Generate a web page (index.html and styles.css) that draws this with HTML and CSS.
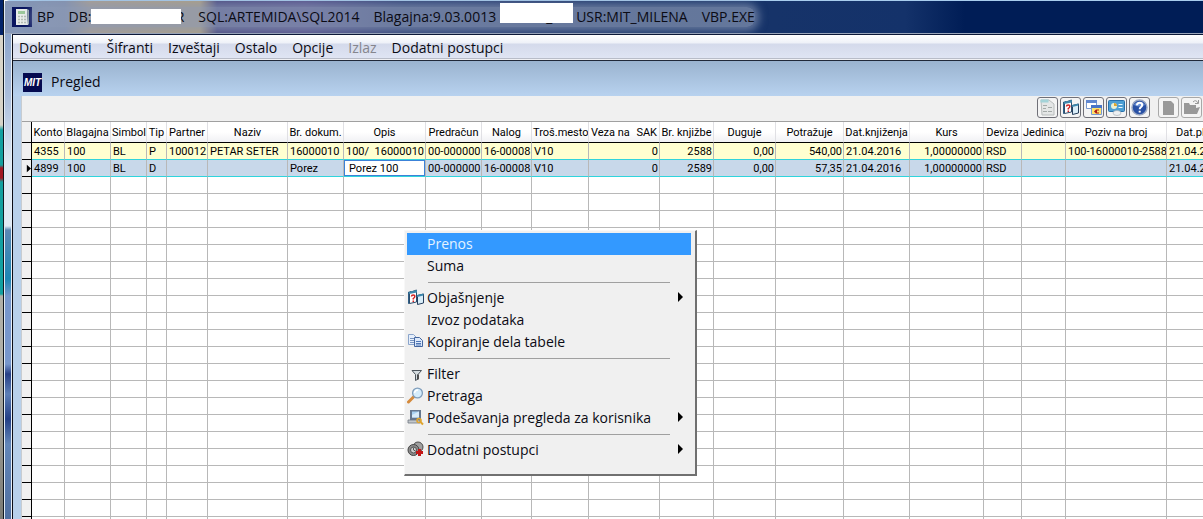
FILE: index.html
```html
<!DOCTYPE html>
<html lang="sr-Latn">
<head>
<meta charset="utf-8">
<title>BP - Pregled</title>
<link rel="stylesheet" href="styles.css">
</head>
<body>
<div class="desktop"></div>
<div class="window">
  <header class="titlebar">
    <svg class="app-icon" viewBox="0 0 20 20"><rect width="20" height="20" fill="#0a1560"/><path d="M4 2h11l1 16H4z" fill="#e9ecea"/><path d="M15 2l2 1v14l-1 1z" fill="#9aa"/><rect x="6" y="4" width="7" height="3" fill="#9cc79a"/><path d="M6 9.500h8M6 12.500h8M6 15.500h8" stroke="#b4bcb4" stroke-width="1.500" stroke-dasharray="2 1"/></svg>
    <div class="title-text">
      <span>BP</span>
      <span class="db">DB:<span class="mask mask-db"><span>_</span><span>_R</span></span></span>
      <span>SQL:ARTEMIDA\SQL2014</span>
      <span>Blagajna:9.03.0013</span>
      <span class="mask mask-user"><span>_</span></span>
      <span>USR:MIT_MILENA</span>
      <span class="exe">VBP.EXE</span>
    </div>
  </header>
  <div class="body">
    <div class="frame"></div>
    <div class="client">
      <nav class="menubar">
        <button>Dokumenti</button><button>Šifranti</button><button>Izveštaji</button><button>Ostalo</button><button>Opcije</button><button disabled>Izlaz</button><button>Dodatni postupci</button>
      </nav>
      <div class="child-title"><span class="logo">MIT</span><h1>Pregled</h1></div>
      <main class="child">
        <div class="toolbar">
          <button aria-label="List"><svg viewBox="0 0 19 19"><path d="M3 2h8l5 4v11H4z" fill="#e4e6e6" stroke="#b8bcbc"/><path d="M2.500 1.500h8v3h-8z" fill="#a3d3d8"/><path d="M5 7.500h4M5 10.500h3M5 13.500h4M10 9.500h4M10 13.500h4" stroke="#a4aaa8"/></svg></button>
          <button aria-label="Objašnjenje"><svg viewBox="0 0 19 19"><use href="#i-explain" x="1" y="1" width="17" height="17"/></svg></button>
          <button aria-label="Prozori"><svg viewBox="0 0 19 19"><path d="M2.500 2.500h10v8h-10z" fill="#fff" stroke="#7899d0"/><path d="M2 2h11v3H2z" fill="#6087cf"/><path d="M7.500 7.500h10v9h-10z" fill="#ffe36a" stroke="#7899d0"/><path d="M7 7h11v3H7z" fill="#4975c6"/><path d="M15 11.500h-3l-2 2 2 2h3v-1h-2v-2h2z" fill="#b01818"/></svg></button>
          <button aria-label="Prikaz"><svg viewBox="0 0 19 19"><rect x="1.500" y="2.500" width="16" height="11" rx="1" fill="#4d9fd3" stroke="#2871ac"/><circle cx="7" cy="8" r="3" fill="#e9f1d4"/><path d="M7 8V5a3 3 0 0 1 3 3z" fill="#e0a52c"/><path d="M11.500 6.500h4M11.500 9.500h4" stroke="#e8f6ff"/><ellipse cx="10" cy="15" rx="4" ry="2.500" fill="#eef0f2" stroke="#a0a8b0" stroke-width=".6"/></svg></button>
          <button aria-label="Pomoć"><svg viewBox="0 0 19 19"><circle cx="9.500" cy="9.500" r="7.500" fill="#2850a5" stroke="#9aa7c2" stroke-width="1.500"/><path d="M4 7a6 5 0 0 1 11 0q-5 3-11 0z" fill="#6d92d6"/><path d="M7 7.300q0-2.600 2.600-2.600t2.600 2.300q0 1.500-1.500 2.300-1 .6-1 1.900M9.700 12.700v1.800" fill="none" stroke="#fff" stroke-width="2"/></svg></button>
          <button class="gap" aria-label="Novi" disabled><svg viewBox="0 0 19 19"><path d="M4 3h8l3 3v11H4z" fill="#999"/></svg></button>
          <button aria-label="Otvori" disabled><svg viewBox="0 0 19 19"><path d="M2 5h5l1 2h6v3l4-1-3 7H2z" fill="#999"/><path d="M11 4q3-3 5 1M16.500 2v3.500H13" fill="none" stroke="#999"/></svg></button>
        </div>
        <div class="grid-area">
          <table class="grid">
            <colgroup><col class="w10"><col class="w33"><col class="w46"><col class="w36"><col class="w20"><col class="w41"><col class="w80"><col class="w56"><col class="w82"><col class="w56"><col class="w50"><col class="w57"><col class="w71"><col class="w54"><col class="w62"><col class="w68"><col class="w66"><col class="w74"><col class="w38"><col class="w44"><col class="w101"><col class="w80"></colgroup>
            <thead><tr><th></th><th>Konto</th><th>Blagajna</th><th>Simbol</th><th>Tip</th><th>Partner</th><th>Naziv</th><th>Br. dokum.</th><th>Opis</th><th>Predračun</th><th>Nalog</th><th>Troš.mesto</th><th><span class="pair"><span>Veza na</span><span>SAK</span></span></th><th>Br. knjižbe</th><th>Duguje</th><th>Potražuje</th><th>Dat.knjiženja</th><th>Kurs</th><th>Deviza</th><th>Jedinica</th><th>Poziv na broj</th><th>Dat.plaćanja</th></tr></thead>
            <tbody id="rows">
              <tr class="odd"><td></td><td>4355</td><td>100</td><td>BL</td><td>P</td><td>100012</td><td>PETAR SETER</td><td>16000010</td><td>100/&nbsp; 16000010</td><td>00-000000</td><td>16-00008</td><td>V10</td><td class="n">0</td><td class="n">2588</td><td class="n">0,00</td><td class="n">540,00</td><td>21.04.2016</td><td class="n">1,00000000</td><td>RSD</td><td></td><td>100-16000010-2588</td><td>21.04.2016</td></tr>
              <tr class="current"><td><svg class="pointer" viewBox="0 0 6 9"><path d="M1 0l5 4.500L1 9z"/></svg></td><td>4899</td><td>100</td><td>BL</td><td>D</td><td></td><td></td><td>Porez</td><td class="edit"><input aria-label="Opis" value="Porez 100"></td><td>00-000000</td><td>16-00008</td><td>V10</td><td class="n">0</td><td class="n">2589</td><td class="n">0,00</td><td class="n">57,35</td><td>21.04.2016</td><td class="n">1,00000000</td><td>RSD</td><td></td><td></td><td>21.04.2016</td></tr>
            </tbody>
          </table>
        </div>
      </main>
    </div>
  </div>
</div>
<div class="context" role="menu">
  <button class="selected">Prenos</button>
  <button>Suma</button>
  <hr>
  <button class="sub"><svg class="ico" viewBox="0 0 17 17"><g id="i-explain-g"><path d="M1 3l3-1v12l-3 1z" fill="#2f5f86"/><path d="M2.500 3.500l7-2.500v12l-7 1.500z" fill="#fff" stroke="#2c4c6c"/><path d="M2 3l8-2v2.500L2 5z" fill="#3c87ac"/><path d="M4.500 7.500q0-1.500 1.700-1.500t1.600 1.500q0 1-1.500 2v1M6.300 11.500v1.500" fill="none" stroke="#d42222" stroke-width="1.500"/><path d="M10.500 6.500l6-1.500v9l-6 1.500z" fill="#d9edf8" stroke="#263e5c"/><path d="M10 6l6.500-1.500v2L10 8z" fill="#3c87ac"/></g></svg>Objašnjenje</button>
  <button>Izvoz podataka</button>
  <button><svg class="ico" viewBox="0 0 17 17"><path d="M1.500 1.500h5l3 3v7h-8z" fill="#e6effb" stroke="#8aa4cb"/><path d="M3 5.500h4M3 7.500h4M3 9.500h4" stroke="#7894c0"/><path d="M7.500 4.500h5l3 3v6h-8z" fill="#dbe8fa" stroke="#44669f"/><path d="M9 8.500h5M9 10.500h5M9 12h5" stroke="#4e76b6"/></svg>Kopiranje dela tabele</button>
  <hr>
  <button><svg class="ico" viewBox="0 0 17 17"><path d="M5 5.500h9.500L11 9.500v4.500l-2.500 1.500v-6z" fill="#d5dce0" stroke="#4c555c"/><path d="M11 9.500v5" stroke="#333" stroke-width="1.500"/></svg>Filter</button>
  <button><svg class="ico" viewBox="0 0 17 17"><path d="M1.500 15l5-5" stroke="#d58a3c" stroke-width="3" stroke-linecap="round"/><circle cx="10.500" cy="6" r="4.900" fill="#d5ecfb" stroke="#7f9dbb" stroke-width="1.300"/><path d="M7.500 6q.5-3 3.500-3" fill="none" stroke="#fff" stroke-width="1.500"/></svg>Pretraga</button>
  <button class="sub"><svg class="ico" viewBox="0 0 17 17"><path d="M3 1h11v10H3z" fill="#65788f"/><path d="M5 2.500h7v6H5z" fill="#a9d3f3"/><path d="M5 6l7-3.500v6H5z" fill="#d7ecfa"/><path d="M1 11h12v3H1z" fill="#c2c7cc" stroke="#6e7780" stroke-width=".8"/><circle cx="12" cy="11.500" r="2" fill="none" stroke="#dfa42d" stroke-width="1.600"/><path d="M13 12.500l3 3" stroke="#dfa42d" stroke-width="2"/></svg>Podešavanja pregleda za korisnika</button>
  <hr>
  <button class="sub"><svg class="ico" viewBox="0 0 17 17"><circle cx="11" cy="6" r="5" fill="#a0a0a0" stroke="#4d4d4d"/><circle cx="6.500" cy="9" r="5.500" fill="#8a8a8a" stroke="#444"/><circle cx="6.500" cy="9" r="3" fill="#cfcfcf" stroke="#555"/><path d="M6.500 6.500V9l2 1" fill="none" stroke="#555"/><path d="M12.500 8v7M9 11.500h7" stroke="#c31717" stroke-width="3"/></svg>Dodatni postupci</button>
</div>
<svg class="defs" aria-hidden="true"><symbol id="i-explain" viewBox="0 0 17 17"><use href="#i-explain-g"/></symbol></svg>
<script src="script.js"></script>
</body>
</html>
```
FILE: styles.css
```css
* { box-sizing: border-box; }
body {
  margin: 0;
  height: 100vh;
  overflow: hidden;
  display: flex;
  position: relative;
  font-family: "Open Sans", "Noto Sans", sans-serif;
  font-size: 14px;
  color: #0b0b14;
}
button {
  font: inherit;
  color: inherit;
  border: 0;
  padding: 0;
  background: none;
  text-align: left;
  white-space: nowrap;
}
.desktop {
  flex: 0 0 4px;
  border-right: 1px solid #101820;
  background: linear-gradient(#03246a 0 35px, #d8d4c8 35px 125px, #12a0a0 130px 165px, #a01824 168px 178px, #12a0a0 182px 294px, #b0b0a8 296px 365px, #7a7a74);
}
.window {
  flex: 1;
  min-width: 0;
  display: flex;
  flex-direction: column;
  border-top: 1px solid #a8cdee;
  border-left: 1px solid #e0eaf4;
  border-top-left-radius: 6px;
  background: #8fa8cc;
}
.titlebar {
  flex: 0 0 33px;
  display: flex;
  align-items: center;
  padding-left: 7px;
  gap: 3px;
  border-bottom: 1px solid #9aa6bb;
  background: linear-gradient(90deg, #8597b8 0, #8291ae 60px, #a99f92 85px, #aea083 195px, #4a4a80 212px, #54508a 300px, #2e4276 400px, #183468 640px, #14326a 900px, #001d56 960px, #001d56);
}
.app-icon { width: 20px; height: 20px; }
.title-text {
  display: flex;
  height: 20px;
  align-items: center;
  line-height: 20px;
  padding-left: 2px;
  border-radius: 8px;
  white-space: nowrap;
  background: #8b99b6aa;
  box-shadow: 0 0 8px 4px #8b99b6aa;
}
.title-text > span { margin-right: 14px; }
.title-text > .exe { margin-right: 0; }
.title-text > .mask-user { margin: 0 3px 0 -10px; }
.db { display: flex; }
.mask { position: relative; display: flex; }
.mask-db { width: 93px; padding-left: 24px; justify-content: space-between; }
.mask-user { width: 73px; padding-left: 46px; }
.mask::after { content: ""; position: absolute; left: 0; background: #fff; }
.mask-db::after { top: 2px; width: 90px; height: 15px; }
.mask-user::after { top: -4px; width: 73px; height: 20px; }
.body { flex: 1; min-height: 0; display: flex; }
.frame {
  flex: 0 0 7px;
  border-right: 1px solid #e8f0f8;
  background: linear-gradient(#8da6cc 0, #a9bddb 60px, #dfe9f4 130px, #dfe9f4 192px, #5c88b4 196px, #1c86b4 245px, #7797cc 262px, #7797cc 330px, #263f86 340px, #5c7fb6 360px, #233f86 385px, #6286b8 410px, #4f6fa0);
}
.client {
  flex: 1;
  min-width: 0;
  display: flex;
  flex-direction: column;
  border-top: 1px solid #0c1838;
  border-left: 1px solid #0c0c14;
  background: #b8d0ea;
}
.menubar {
  flex: 0 0 26px;
  display: flex;
  align-items: center;
  gap: 15px;
  padding-left: 6px;
  border-bottom: 1px solid #202838;
  box-shadow: inset 0 -1px #f0f0f4, inset 0 -2px #b8bcc8;
  background: linear-gradient(#fff 0, #eef1f8 8px, #d4daeb 9px, #e0e5f4 24px);
}
.menubar button:disabled { color: #85858d; }
.child-title {
  flex: 0 0 35px;
  display: flex;
  align-items: center;
  gap: 9px;
  padding: 7px 0 0 10px;
  background: linear-gradient(#9ab3cf, #b8d2ef);
}
.logo {
  width: 19px;
  height: 19px;
  background: #050a50;
  color: #fff;
  font: italic bold 10px/19px "Liberation Sans", sans-serif;
  text-align: center;
}
h1 { margin: 0; font-size: 14px; font-weight: 400; line-height: 20px; }
.child {
  flex: 1;
  min-height: 0;
  display: flex;
  flex-direction: column;
  margin-left: 8px;
  border-left: 1px solid #c8ccd0;
  background: #f0f0f0;
}
.toolbar {
  flex: 0 0 25px;
  display: flex;
  justify-content: flex-end;
  align-items: flex-start;
  gap: 2px;
  padding: 1px 1px 0 0;
}
.toolbar button {
  width: 21px;
  height: 21px;
  border: 1px solid #707078;
  border-radius: 3px;
  background: #f4f4f4;
}
.toolbar .gap { margin-left: 6px; }
.toolbar button:disabled { border-color: #a8a8a8; }
.toolbar svg { display: block; width: 19px; height: 19px; }
.grid-area { flex: 1; min-height: 0; overflow: hidden; border-top: 1px solid #a0a0a0; background: #fff; }
.grid {
  table-layout: fixed;
  width: 1225px;
  border-spacing: 0;
  font: 11px/15px Roboto, "Liberation Sans", sans-serif;
  color: #000;
}
.grid th, .grid td {
  overflow: hidden;
  white-space: nowrap;
  padding: 0 1px 0 2px;
  height: 17px;
  border-right: 1px solid #b8b8b8;
  border-bottom: 1px solid #b8b8b8;
}
.grid th {
  height: 21px;
  padding: 0 1px;
  font-weight: 400;
  text-align: center;
  border-right-color: #e0e0e4;
  border-bottom-color: #000;
  background: linear-gradient(#fff, #fff 50%, #f0f1f4);
}
.grid tr > :first-child {
  padding: 0 0 0 4px;
  border-right-color: #000;
  border-bottom-color: #000;
  background: #f0f0f0;
}
.grid .n { text-align: right; }
.odd td { background: #ffffd0; border-bottom-color: #30d4dc; }
.current td { background: #c8d8ea; border-bottom-color: #30d4dc; }
.grid .edit { padding: 0; }
.edit input {
  display: block;
  width: 100%;
  height: 16px;
  padding: 0 4px;
  border: 1px solid #3c82d8;
  background: #fff;
  font: inherit;
}
.pair { display: flex; justify-content: space-between; padding: 0 1px; }
.pointer { display: block; width: 5px; height: 9px; }
.w10 { width: 10px; } .w20 { width: 20px; } .w33 { width: 33px; } .w36 { width: 36px; }
.w38 { width: 38px; } .w41 { width: 41px; } .w44 { width: 44px; } .w46 { width: 46px; }
.w50 { width: 50px; } .w54 { width: 54px; } .w56 { width: 56px; } .w57 { width: 57px; }
.w62 { width: 62px; } .w66 { width: 66px; } .w68 { width: 68px; } .w71 { width: 71px; }
.w74 { width: 74px; } .w80 { width: 80px; } .w82 { width: 82px; } .w101 { width: 101px; }
.context {
  position: absolute;
  left: 404px;
  top: 230px;
  width: 293px;
  display: flex;
  flex-direction: column;
  padding: 2px 4px 13px 2px;
  border: 1px solid #f8f8f8;
  border-right: 2px solid #707070;
  border-bottom: 2px solid #707070;
  background: #f0f0f0;
}
.context button {
  position: relative;
  height: 22px;
  line-height: 22px;
  padding-left: 20px;
}
.context .selected { background: #3399ff; color: #e4f3ff; }
.context hr { width: 242px; height: 1px; margin: 5px 0 4px 21px; border: 0; background: #a0a0a0; }
.ico { position: absolute; left: 0; top: 2px; width: 17px; height: 17px; }
.sub::after {
  content: "";
  position: absolute;
  right: 8px;
  top: 5px;
  border-left: 5px solid #000;
  border-top: 5px solid transparent;
  border-bottom: 5px solid transparent;
}
.defs { position: absolute; width: 0; height: 0; }
```
FILE: script.js
```js
const body = document.getElementById("rows");
const columns = document.querySelectorAll(".grid th").length;
for (let r = 0; r < 60; r++) {
  const row = body.insertRow();
  for (let c = 0; c < columns; c++) row.insertCell();
}
```
